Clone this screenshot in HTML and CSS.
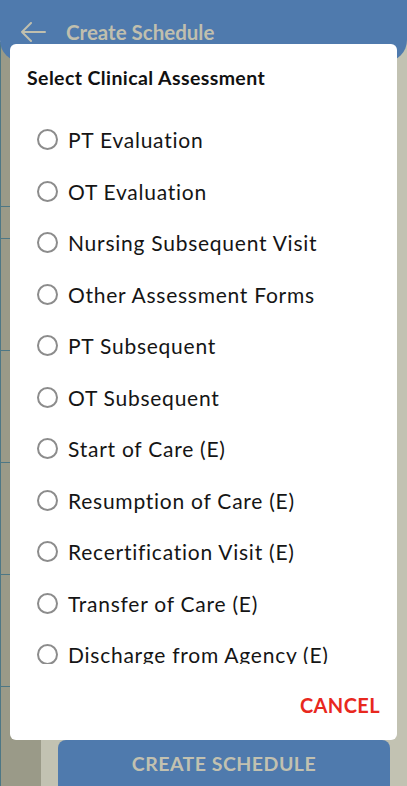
FILE: index.html
```html
<!DOCTYPE html>
<html lang="en">

<head>
  <meta charset="UTF-8">
  <meta name="viewport" content="width=device-width, initial-scale=1.0">
  <title>Create Schedule</title>
  <link rel="stylesheet" href="styles.css">
</head>

<body>
  <div class="screen">
    <header class="app-bar">
      <svg class="back" width="26" height="20" viewBox="0 0 26 20">
        <path d="M25 10H2M11 1L2 10l9 9" fill="none" stroke="currentColor" stroke-width="2" stroke-linecap="round" stroke-linejoin="round"/>
      </svg>
      <span class="app-title">Create Schedule</span>
    </header>

    <main class="content">
      <!-- cards behind the dialog, only the edge shows -->
      <div class="side">
        <div class="side-card tall"></div>
        <div class="side-card short"></div>
        <div class="side-card"></div>
        <div class="side-card"></div>
        <div class="side-card"></div>
        <div class="side-card"></div>
      </div>
      <div class="main-col">
        <button class="create-btn">CREATE SCHEDULE</button>
      </div>
    </main>

    <div class="overlay">
      <div class="dialog">
        <h2 class="dialog-title">Select Clinical Assessment</h2>
        <ul class="options">
          <li class="option"><span class="radio"></span>PT Evaluation</li>
          <li class="option"><span class="radio"></span>OT Evaluation</li>
          <li class="option"><span class="radio"></span>Nursing Subsequent Visit</li>
          <li class="option"><span class="radio"></span>Other Assessment Forms</li>
          <li class="option"><span class="radio"></span>PT Subsequent</li>
          <li class="option"><span class="radio"></span>OT Subsequent</li>
          <li class="option"><span class="radio"></span>Start of Care (E)</li>
          <li class="option"><span class="radio"></span>Resumption of Care (E)</li>
          <li class="option"><span class="radio"></span>Recertification Visit (E)</li>
          <li class="option"><span class="radio"></span>Transfer of Care (E)</li>
          <li class="option"><span class="radio"></span>Discharge from Agency (E)</li>
        </ul>
        <div class="dialog-actions">
          <button class="cancel">CANCEL</button>
        </div>
      </div>
    </div>
  </div>
</body>

</html>
```

FILE: styles.css
```css
/*
* Screen colours are the dimmed ones seen behind the dialog
*/
body {
  margin: 0;
  background: #c2c2b2;
  font-family: Lato, "Noto Sans", sans-serif;
  overflow: hidden;
}

.screen {
  position: relative;
  width: 407px;
  height: 786px;
  display: flex;
  flex-direction: column;
}

.app-bar {
  height: 62px;
  flex: none;
  display: flex;
  align-items: center;
  gap: 20px;
  padding: 0 0 0 20px;
  background: #4f7aad;
  border-radius: 0 0 22px 22px;
  color: #c0bfae;
  position: relative;
  z-index: 1;
}

.back {
  margin-top: 2px;
}

.app-title {
  font-size: 20.5px;
  font-weight: 700;
  margin-top: 2px;
}

.content {
  flex: 1;
  display: flex;
  gap: 17px;
  margin-top: -20px;
}

.side {
  width: 40px;
  background: #9a9a88;
  border-left: 1px solid #4d7785;
  padding-top: 20px;
}

.side-card {
  height: 111px;
  border-bottom: 1px solid #4d7785;
}

.side-card.tall {
  height: 144px;
}

.side-card.short {
  height: 31px;
}

.main-col {
  flex: 1;
  display: flex;
  flex-direction: column;
  justify-content: flex-end;
  padding-right: 17px;
}

.create-btn {
  height: 64px;
  margin-bottom: -18px;
  border: none;
  border-radius: 8px;
  background: #4f7aad;
  color: #c2c1b0;
  font-family: inherit;
  font-size: 19.5px;
  font-weight: 700;
  letter-spacing: 0.5px;
  padding: 0 0 18px;
}

.overlay {
  position: absolute;
  inset: 0;
  z-index: 2;
}

.dialog {
  position: absolute;
  top: 44px;
  left: 10px;
  width: 387px;
  height: 696px;
  background: #fff;
  border-radius: 6px;
  display: flex;
  flex-direction: column;
}

.dialog-title {
  margin: 0;
  padding: 22px 0 0 17px;
  font-size: 19.5px;
  line-height: 24px;
  font-weight: 700;
  letter-spacing: 0.4px;
  color: #111;
}

.options {
  list-style: none;
  margin: 24px 0 0;
  padding: 0;
  height: 550px;
  overflow: hidden;
}

.option {
  height: 51.5px;
  display: flex;
  align-items: center;
  gap: 10px;
  padding-left: 28px;
  font-size: 21px;
  letter-spacing: 0.75px;
  color: #151515;
}

.radio {
  width: 17px;
  height: 17px;
  border: 2px solid #8c8c8c;
  border-radius: 50%;
  flex: none;
  margin-left: -1px;
}

.dialog-actions {
  display: flex;
  justify-content: flex-end;
  padding: 29px 17px 0 0;
}

.cancel {
  border: none;
  background: none;
  padding: 0;
  font-family: inherit;
  font-size: 20px;
  line-height: 24px;
  font-weight: 700;
  color: #e8281e;
  letter-spacing: 0.4px;
}
```
